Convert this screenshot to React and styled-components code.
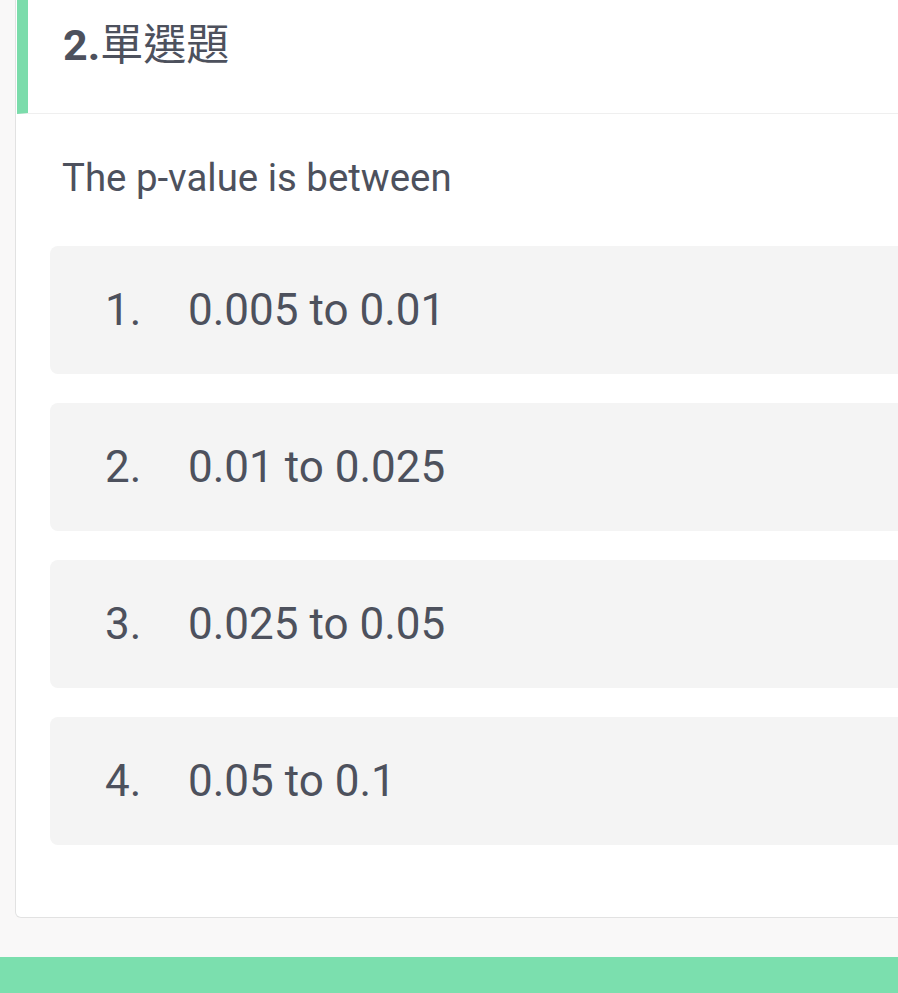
import React from "react";
import styled, { createGlobalStyle } from "styled-components";

const GlobalStyle = createGlobalStyle`
  html, body {
    margin: 0;
    padding: 0;
    background: #f9f8f8;
    overflow: hidden;
  }
  body {
    font-family: Roboto, "Noto Sans CJK TC", sans-serif;
    color: #4d515d;
  }
`;

const Page = styled.div`
  display: flex;
  flex-direction: column;
  min-height: 993px;
`;

const Card = styled.section`
  margin-left: 15px;
  margin-right: -20px;
  background: #ffffff;
  border: 1px solid #e2e2e2;
  border-top: none;
  border-radius: 0 0 6px 6px;
  padding-bottom: 72px;
`;

const Header = styled.header`
  box-sizing: border-box;
  height: 114px;
  margin-left: 1px;
  border-left: 11px solid #7bdcab;
  border-bottom: 1px solid #efefef;
  padding: 19px 0 0 35px;
`;

const Title = styled.h2`
  margin: 0;
  font-size: 43px;
  line-height: 52px;
  font-weight: 400;
  color: #4d515d;

  b {
    font-weight: 700;
  }
`;

const Body = styled.div`
  padding: 40px 0 0 34px;
`;

const Question = styled.p`
  margin: 0 0 44px 12px;
  font-size: 38.4px;
  line-height: 48px;
  color: #4d515d;
`;

const Options = styled.ol`
  list-style: none;
  margin: 0;
  padding: 0;
  display: flex;
  flex-direction: column;
  gap: 29px;
`;

const Option = styled.li`
  display: flex;
  align-items: center;
  height: 128px;
  box-sizing: border-box;
  padding-left: 55px;
  background: #f4f4f4;
  border-radius: 8px;
  font-size: 44px;
  color: #4d515d;
`;

const Num = styled.span`
  width: 83px;
  flex: none;
`;

const Footer = styled.footer`
  margin-top: auto;
  height: 36px;
  background: #7bdfae;
`;

const options = ["0.005 to 0.01", "0.01 to 0.025", "0.025 to 0.05", "0.05 to 0.1"];

export default function App() {
  return (
    <Page>
      <GlobalStyle />
      <Card>
        <Header>
          <Title>
            <b>2.</b>單選題
          </Title>
        </Header>
        <Body>
          <Question>The p-value is between</Question>
          <Options>
            {options.map((o, i) => (
              <Option key={o}>
                <Num>{i + 1}.</Num>
                {o}
              </Option>
            ))}
          </Options>
        </Body>
      </Card>
      <Footer />
    </Page>
  );
}
